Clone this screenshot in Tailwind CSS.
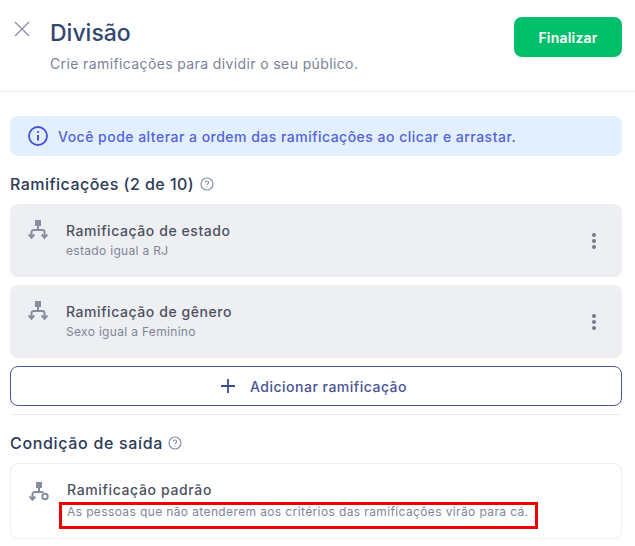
<!DOCTYPE html>
<html lang="en">
<head>
    <meta charset="UTF-8">
    <meta name="viewport" content="width=device-width, initial-scale=1.0">
    <title>Divisão</title>
    <script src="https://cdn.jsdelivr.net/npm/@tailwindcss/browser@4"></script>
</head>
<body class="bg-white font-['Inter',sans-serif] h-[546px] overflow-hidden">
    <!-- header -->
    <div class="flex items-start justify-between h-[92px] pt-[17px] pl-[14px] pr-[13px] border-b border-[#ebebef]">
        <div class="flex">
            <svg class="w-[16px] h-[16px] mt-[4px] text-[#8a92a6]" viewBox="0 0 16 16" fill="none" stroke="currentColor" stroke-width="1.4"><path d="M1 1l14 14M15 1L1 15"/></svg>
            <div class="ml-[20px]">
                <h1 class="mt-[1px] text-[23px] leading-[30px] font-medium text-[#33466f]">Divisão</h1>
                <p class="mt-[6px] text-[14px] leading-[20px] text-[#7b8296] tracking-[0.38px]">Crie ramificações para dividir o seu público.</p>
            </div>
        </div>
        <button class="w-[108px] h-[40px] rounded-lg bg-[#00bf6a] text-white text-[14px] font-semibold tracking-[0.2px]">Finalizar</button>
    </div>

    <div class="px-[10px] pt-[24px] w-[612px] box-content">
        <!-- info -->
        <div class="flex items-center h-[40px] pl-[18px] rounded-lg bg-[#e2effe] text-[#5463d8] text-[14px] font-medium tracking-[0.48px]">
            <svg class="w-[20px] h-[20px] mr-[10px]" viewBox="0 0 20 20" fill="none" stroke="#4353d6" stroke-width="1.8"><circle cx="10" cy="10" r="9"/><path d="M10 9v5.5" stroke-width="2"/><circle cx="10" cy="6" r="1.1" fill="#4353d6" stroke="none"/></svg>
            Você pode alterar a ordem das ramificações ao clicar e arrastar.
        </div>

        <div class="flex items-center mt-[18px] h-[20px] text-[16px] font-medium text-[#2d3a58] tracking-[0.47px]">
            Ramificações (2 de 10)
            <svg class="w-[14px] h-[14px] ml-[6px]" viewBox="0 0 14 14" fill="none" stroke="#8a92a6" stroke-width="1.2"><circle cx="7" cy="7" r="6"/><path d="M5.4 5.6a1.6 1.6 0 1 1 2.4 1.4c-.5.3-.8.6-.8 1.1"/><path d="M7 9.6v.8"/></svg>
        </div>

        <!-- branches -->
        <div class="mt-[10px] flex flex-col gap-[8px]">
            <div class="flex items-center h-[73px] pl-[18px] pr-[26px] rounded-lg bg-[#eeeff2]">
                <svg class="w-[20px] h-[22px] self-start mt-[15px] text-[#868da3]" viewBox="0 0 20 22" fill="none" stroke="currentColor" stroke-width="2"><rect x="7" y="1" width="6" height="6" fill="currentColor" stroke="none"/><path d="M10 7v4M3.5 18v-5a2 2 0 0 1 2-2h9a2 2 0 0 1 2 2v5"/><path d="M.7 15.5l2.8 3.2 2.8-3.2M13.7 15.5l2.8 3.2 2.8-3.2"/></svg>
                <div class="ml-[18px] flex-1">
                    <div class="text-[14px] leading-[20px] font-medium text-[#4d515f] tracking-[0.57px]">Ramificação de estado</div>
                    <div class="mt-[1px] text-[12px] leading-[18px] text-[#7e859b] tracking-[0.32px]">estado igual a RJ</div>
                </div>
                <svg class="w-[4px] h-[16px] text-[#747b8e]" viewBox="0 0 4 16" fill="currentColor"><circle cx="2" cy="2" r="2"/><circle cx="2" cy="8" r="2"/><circle cx="2" cy="14" r="2"/></svg>
            </div>
            <div class="flex items-center h-[73px] pl-[18px] pr-[26px] rounded-lg bg-[#eeeff2]">
                <svg class="w-[20px] h-[22px] self-start mt-[15px] text-[#868da3]" viewBox="0 0 20 22" fill="none" stroke="currentColor" stroke-width="2"><rect x="7" y="1" width="6" height="6" fill="currentColor" stroke="none"/><path d="M10 7v4M3.5 18v-5a2 2 0 0 1 2-2h9a2 2 0 0 1 2 2v5"/><path d="M.7 15.5l2.8 3.2 2.8-3.2M13.7 15.5l2.8 3.2 2.8-3.2"/></svg>
                <div class="ml-[18px] flex-1">
                    <div class="text-[14px] leading-[20px] font-medium text-[#4d515f] tracking-[0.57px]">Ramificação de gênero</div>
                    <div class="mt-[1px] text-[12px] leading-[18px] text-[#7e859b] tracking-[0.32px]">Sexo igual a Feminino</div>
                </div>
                <svg class="w-[4px] h-[16px] text-[#747b8e]" viewBox="0 0 4 16" fill="currentColor"><circle cx="2" cy="2" r="2"/><circle cx="2" cy="8" r="2"/><circle cx="2" cy="14" r="2"/></svg>
            </div>
        </div>

        <button class="mt-[8px] w-full h-[40px] pr-[4px] flex items-center justify-center rounded-lg border border-[#4a5496] text-[#4a5496] text-[14px] font-medium tracking-[0.5px]">
            <svg class="w-[14px] h-[14px] mr-[15px]" viewBox="0 0 14 14" fill="none" stroke="#3d4a8f" stroke-width="1.8"><path d="M7 0v14M0 7h14"/></svg>
            Adicionar ramificação
        </button>

        <div class="mt-[8px] border-t border-[#ebebef]"></div>

        <div class="flex items-center mt-[18px] h-[20px] text-[16px] font-medium text-[#2d3a58] tracking-[0.67px]">
            Condição de saída
            <svg class="w-[14px] h-[14px] ml-[5px]" viewBox="0 0 14 14" fill="none" stroke="#8a92a6" stroke-width="1.2"><circle cx="7" cy="7" r="6"/><path d="M5.4 5.6a1.6 1.6 0 1 1 2.4 1.4c-.5.3-.8.6-.8 1.1"/><path d="M7 9.6v.8"/></svg>
        </div>

        <!-- default branch -->
        <div class="relative mt-[10px] flex h-[76px] pl-[18px] rounded-lg border border-[#eeeff2]">
            <svg class="w-[20px] h-[22px] mt-[17px] text-[#868da3]" viewBox="0 0 20 22" fill="none" stroke="currentColor" stroke-width="2"><rect x="7" y="1" width="6" height="6" fill="currentColor" stroke="none"/><path d="M10 7v4M3.5 18v-5a2 2 0 0 1 2-2h9"/><path d="M.7 15.5l2.8 3.2 2.8-3.2"/><circle cx="16" cy="15.5" r="2.7"/></svg>
            <div class="ml-[18px] pt-[16px]">
                <div class="text-[14px] leading-[20px] font-medium text-[#4d515f] tracking-[0.64px]">Ramificação padrão</div>
                <div class="mt-[3px] text-[12px] leading-[18px] text-[#7e859b] tracking-[0.38px]">As pessoas que não atenderem aos critérios das ramificações virão para cá.</div>
            </div>
            <!-- red annotation -->
            <div class="absolute left-[48px] top-[38px] w-[479px] h-[27px] border-[3px] border-[#f00000]"></div>
        </div>
    </div>
</body>
</html>
